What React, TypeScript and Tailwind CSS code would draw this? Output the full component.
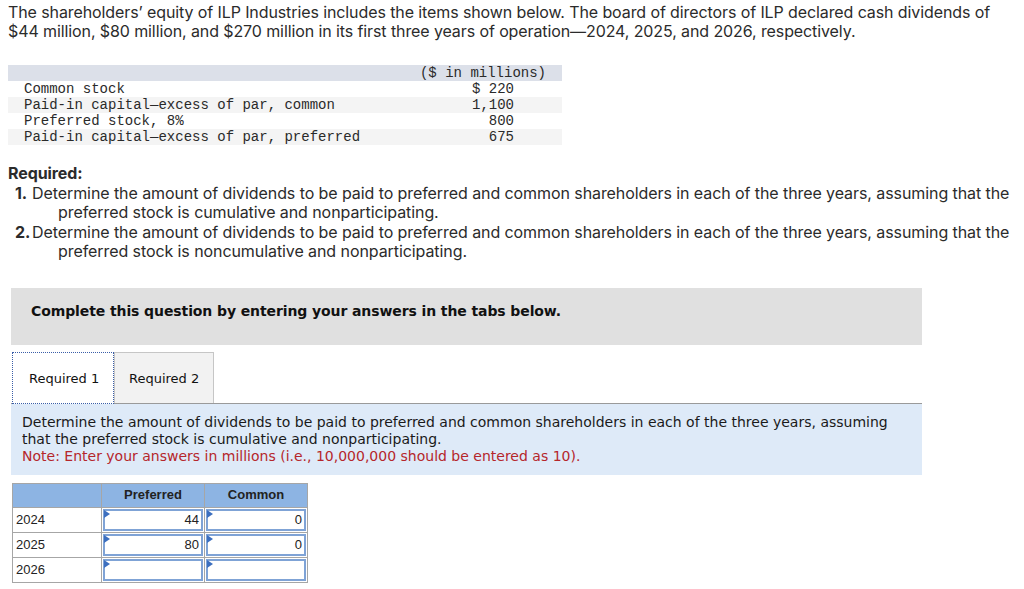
import React from "react";

const body = { fontFamily: "Inter, 'Open Sans', sans-serif" };
const mono = { fontFamily: "'Liberation Mono', 'Courier New', monospace" };
const tahoma = { fontFamily: "'DejaVu Sans', Verdana, sans-serif" };
const arial = { fontFamily: "'Liberation Sans', Arial, sans-serif" };

const stockRows = [
  { label: "Common stock", value: "$ 220" },
  { label: "Paid-in capital\u2014excess of par, common", value: "1,100" },
  { label: "Preferred stock, 8%", value: "800" },
  { label: "Paid-in capital\u2014excess of par, preferred", value: "675" },
];

const answers = [
  { year: "2024", preferred: "44", common: "0" },
  { year: "2025", preferred: "80", common: "0" },
  { year: "2026", preferred: "", common: "" },
];

function AnswerCell({ value }: { value: string }) {
  return (
    <td className="border border-[#a6a6a6] p-[1px] h-[24px]">
      <div className="relative h-[22px] border-2 border-[#7fa3d6] bg-white flex items-center justify-end pr-[2px] text-[13px] text-[#222]">
        <span className="absolute left-[-1px] top-[-1px] w-0 h-0 border-t-[4px] border-b-[4px] border-l-[6px] border-t-transparent border-b-transparent border-l-[#3c6fbf]" />
        {value}
      </div>
    </td>
  );
}

export default function App() {
  return (
    <div className="bg-white min-h-[589px] px-2 pt-[3px] text-[#2b2b2b]" style={body}>
      <p className="text-[16px] leading-[19px] tracking-[-0.1px] whitespace-nowrap">
        The shareholders&rsquo; equity of ILP Industries includes the items shown below. The board of directors of ILP declared cash dividends of
        <br />
        $44 million, $80 million, and $270 million in its first three years of operation&mdash;2024, 2025, and 2026, respectively.
      </p>

      {/* stock table */}
      <div className="mt-[24px] w-[554px] text-[14px] leading-[16px] text-[#2a2a2a]" style={mono}>
        <div className="flex bg-[#dce0e9] h-[16px]">
          <div className="flex-1" />
          <div className="pr-4">($ in millions)</div>
        </div>
        {stockRows.map((r, i) => (
          <div key={r.label} className={`flex h-[16px] ${i % 2 === 1 ? "bg-[#f4f4f4]" : ""}`}>
            <div className="flex-1 pl-4 whitespace-pre">{r.label}</div>
            <div className="pr-12 text-right whitespace-pre">{r.value}</div>
          </div>
        ))}
      </div>

      {/* required */}
      <div className="mt-[19px] text-[16px] leading-[19.5px] tracking-[-0.08px] whitespace-nowrap">
        <div className="font-bold">Required:</div>
        <div className="flex pl-[7px]">
          <span className="font-bold w-[17px] shrink-0">1.</span>
          <div>
            Determine the amount of dividends to be paid to preferred and common shareholders in each of the three years, assuming that the
            <br />
            <span className="pl-[26px]">preferred stock is cumulative and nonparticipating.</span>
          </div>
        </div>
        <div className="flex pl-[7px]">
          <span className="font-bold w-[17px] shrink-0">2.</span>
          <div>
            Determine the amount of dividends to be paid to preferred and common shareholders in each of the three years, assuming that the
            <br />
            <span className="pl-[26px]">preferred stock is noncumulative and nonparticipating.</span>
          </div>
        </div>
      </div>

      {/* instructions box */}
      <div className="ml-[3px] mt-[26px] w-[911px] h-[57px] bg-[#e0e0e0] pl-5 pt-[15px]" style={tahoma}>
        <div className="text-[14px] leading-[16px] font-bold text-[#111] tracking-[-0.1px]">
          Complete this question by entering your answers in the tabs below.
        </div>
      </div>

      {/* tabs */}
      <div className="ml-[3px] mt-[7px] w-[911px] flex items-end border-b border-[#9a9a9a]" style={tahoma}>
        <div className="ml-[1px] w-[102px] h-[52px] bg-white border border-dotted border-[#3a5ea8] flex items-center pl-4 pt-[2px] text-[13px] text-[#111] mb-[-1px]">
          Required 1
        </div>
        <div className="w-[100px] h-[51px] bg-[#f2f2f2] border border-b-0 border-[#c6c6c6] flex items-center pl-[14px] pt-[2px] text-[13px] text-[#111]">
          Required 2
        </div>
      </div>

      {/* prompt panel */}
      <div className="ml-[3px] w-[911px] bg-[#deeaf8] pl-[11px] pt-[10px] pb-[10px] text-[14px] leading-[17px] text-[#1a1a1a] whitespace-nowrap" style={tahoma}>
        Determine the amount of dividends to be paid to preferred and common shareholders in each of the three years, assuming
        <br />
        that the preferred stock is cumulative and nonparticipating.
        <br />
        <span className="text-[#b5262b]">Note: Enter your answers in millions (i.e., 10,000,000 should be entered as 10).</span>
      </div>

      {/* answer table */}
      <table className="ml-[4px] mt-[8px] border-collapse text-[13px] text-[#222]" style={arial}>
        <thead>
          <tr className="bg-[#8db4e3] h-[24px]">
            <th className="w-[89px] border border-[#a6a6a6]" />
            <th className="w-[103px] border border-[#a6a6a6] font-bold">Preferred</th>
            <th className="w-[103px] border border-[#a6a6a6] font-bold">Common</th>
          </tr>
        </thead>
        <tbody>
          {answers.map((a) => (
            <tr key={a.year}>
              <td className="border border-[#a6a6a6] pl-[3px] h-[24px]">{a.year}</td>
              <AnswerCell value={a.preferred} />
              <AnswerCell value={a.common} />
            </tr>
          ))}
        </tbody>
      </table>
    </div>
  );
}
